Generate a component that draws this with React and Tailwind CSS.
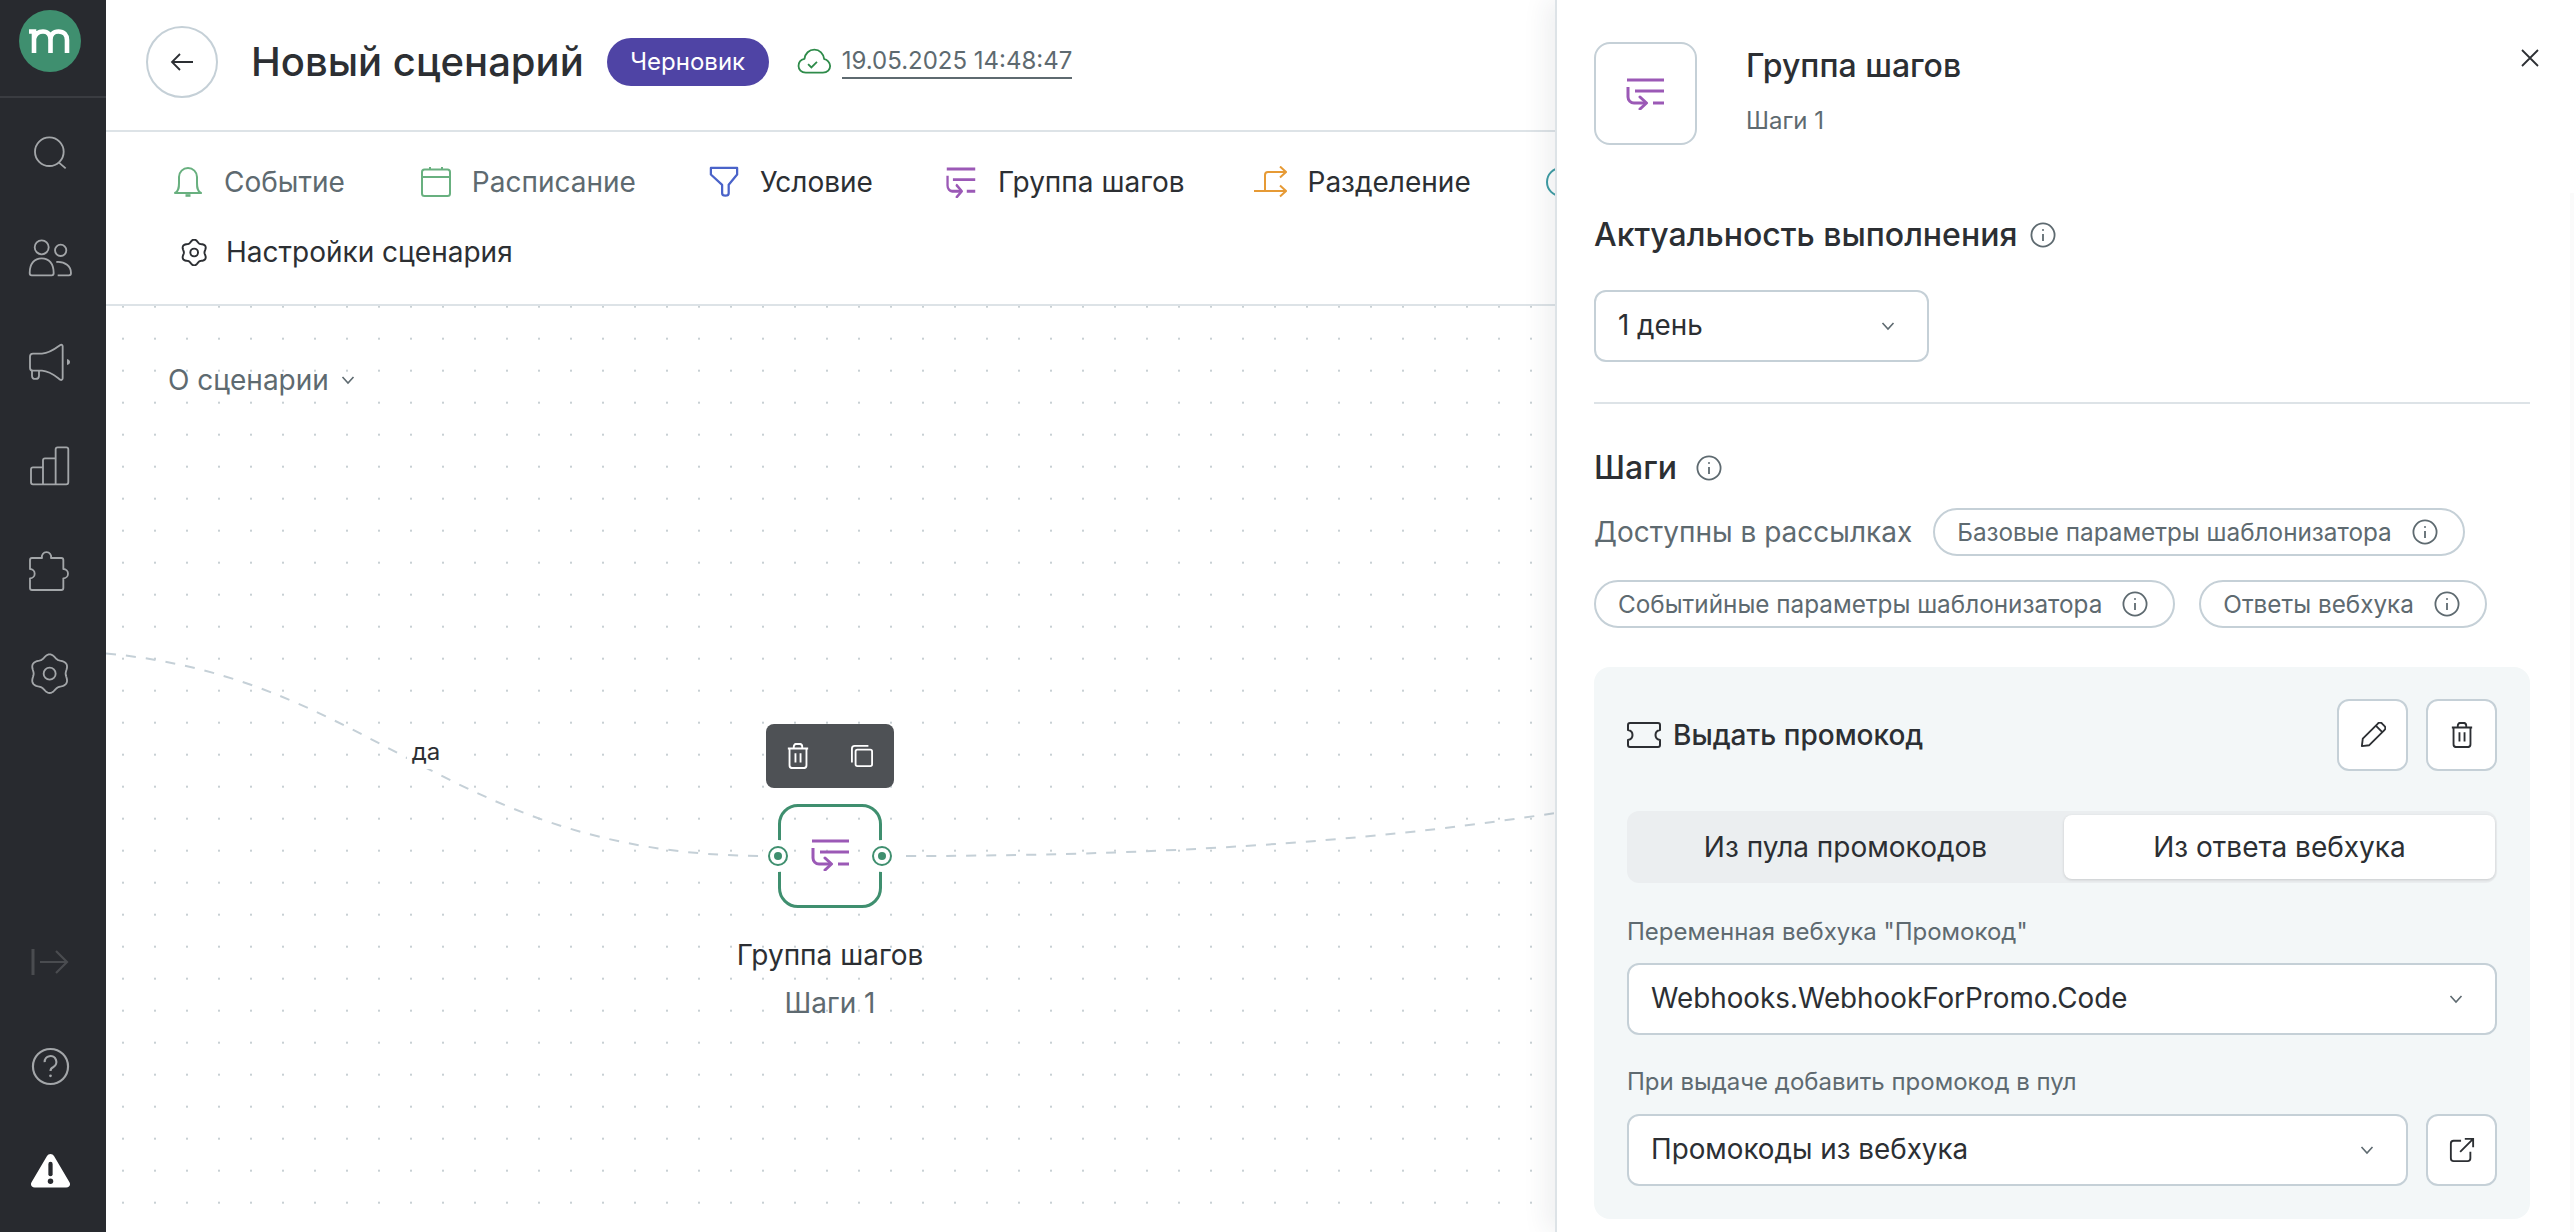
import React from "react";

const F = "font-['Inter',sans-serif]";

function gearPath(cx, cy, base, amp) {
  const pts = [];
  for (let i = 0; i < 120; i++) {
    const t = (i / 120) * Math.PI * 2;
    const r = base + amp * Math.cos(6 * t);
    pts.push(`${(cx + r * Math.sin(t)).toFixed(2)} ${(cy - r * Math.cos(t)).toFixed(2)}`);
  }
  return `M${pts.join("L")}Z`;
}

function GroupIcon({ className = "", stretch = false }) {
  return (
    <svg viewBox="0 0 39 32" preserveAspectRatio={stretch ? "none" : "xMidYMid meet"} className={className} fill="none" stroke="#9b59b6" strokeWidth="3">
      <path d="M1 2H38M9 13H38M27 25H38" />
      <path d="M2 9V19a6 6 0 0 0 6 6H20" />
      <path d="M14 19L20.500 25L14 31" strokeLinecap="round" strokeLinejoin="round" />
    </svg>
  );
}

function Info({ className = "w-[26px] h-[26px]" }) {
  return (
    <svg viewBox="0 0 26 26" className={`${className} shrink-0`} fill="none" stroke="#5e6a70" strokeWidth="1.800">
      <circle cx="13" cy="13" r="11.600" />
      <path d="M13 12V19" />
      <circle cx="13" cy="8" r="1" fill="#5e6a70" stroke="none" />
    </svg>
  );
}

function Chevron({ className = "" }) {
  return (
    <svg viewBox="0 0 14 10" className={`w-[14px] h-[10px] ${className}`} fill="none" stroke="#5e6a70" strokeWidth="1.600">
      <path d="M1.500 2L7 8L12.500 2" />
    </svg>
  );
}

function Trash({ color = "#ffffff" }) {
  return (
    <svg viewBox="0 0 26 28" preserveAspectRatio="none" className="w-[22px] h-[26px]" fill="none" stroke={color} strokeWidth="2.200" strokeLinejoin="round">
      <path d="M1 6H25M8 6V4a3 3 0 0 1 3-3h4a3 3 0 0 1 3 3V6" />
      <path d="M3 6V24a3 3 0 0 0 3 3H20a3 3 0 0 0 3-3V6" />
      <path d="M10 11V21M16 11V21" />
    </svg>
  );
}

function SideIcon({ children, className = "" }) {
  return <div className={`h-[104px] flex items-center justify-center shrink-0 ${className}`}>{children}</div>;
}

function Sidebar() {
  const st = { fill: "none", stroke: "#a3a6a9", strokeWidth: 5.500, strokeLinejoin: "round" };
  return (
    <aside className="w-[106px] h-full bg-[#282a2f] flex flex-col shrink-0 pr-0">
      <div className="h-[98px] border-b-2 border-[#3a3c41] flex items-center pl-[19px] shrink-0 pb-[14px]">
        <svg viewBox="0 0 62 62" className="w-[62px] h-[62px]">
          <circle cx="31" cy="31" r="31" fill="#3f8f6f" />
          <path d="M10 21.500H15V43M15 28.500C16.500 23.500 20 21.500 24 21.500 29 21.500 31.500 25 31.500 29.500V43M31.500 29.500C31.500 25 34 21.500 39.500 21.500 45 21.500 48 25 48 30V43" fill="none" stroke="#ffffff" strokeWidth="4.600" />
        </svg>
      </div>
      <div className="flex flex-col pt-[4px] pr-[6px]">
        <SideIcon className="pb-[3px]">
          <svg viewBox="95 375 105 105" className="w-[35px] h-[35px]" {...st}>
            <circle cx="144" cy="425" r="43" />
            <path d="M173 458L193 475" />
          </svg>
        </SideIcon>
        <SideIcon>
          <svg viewBox="80 685 140 118" className="w-[46.700px] h-[39.300px]" {...st}>
            <circle cx="124" cy="713" r="21" />
            <circle cx="181" cy="722" r="17" />
            <path d="M88 790C88 762 102 746 124 746 146 746 160 762 160 790 160 795 158 797 154 797H94C90 797 88 795 88 790Z" />
            <path d="M168 757C195 755 212 770 212 790 212 795 210 797 206 797H172" />
          </svg>
        </SideIcon>
        <SideIcon>
          <svg viewBox="88 65 132 122" className="w-[44px] h-[40.700px]" {...st}>
            <path d="M103 100H130C155 98 170 85 185 74 188 72 192 74 192 78V174C192 178 188 180 185 178 170 167 155 153 130 151H103C98 151 94 147 94 142V109C94 104 98 100 103 100Z" />
            <path d="M100 151V166C100 179 121 179 121 166V151" />
            <path d="M205 116C211 117 214 121 214 125 214 129 211 133 205 134Z" fill="#a3a6a9" stroke="none" />
          </svg>
        </SideIcon>
        <SideIcon>
          <svg viewBox="88 375 124 124" className="w-[41.300px] h-[41.300px]" {...st}>
            <path d="M130 442H100a6 6 0 0 0-6 6V487a6 6 0 0 0 6 6H200a6 6 0 0 0 6-6V388a6 6 0 0 0-6-6H174a6 6 0 0 0-6 6V493" />
            <path d="M168 415H136a6 6 0 0 0-6 6V493" />
          </svg>
        </SideIcon>
        <SideIcon>
          <svg viewBox="88 678 135 132" className="w-[45px] h-[44px]" {...st}>
            <path d="M100 708H130a14 14 0 1 1 27 0H188a6 6 0 0 1 6 6V741a14 14 0 1 1 0 28V798a6 6 0 0 1-6 6H100a6 6 0 0 1-6-6V769a14 14 0 1 0 0-28V714a6 6 0 0 1 6-6Z" />
          </svg>
        </SideIcon>
        <SideIcon>
          <svg viewBox="88 1000 124 124" className="w-[41.300px] h-[41.300px]" {...st}>
            <path d={gearPath(150, 1062, 53, 5)} />
            <circle cx="150" cy="1062" r="18" />
          </svg>
        </SideIcon>
      </div>
      <div className="flex-1" />
      <div className="flex flex-col pb-[10px] pr-[6px]">
        <SideIcon>
          <svg viewBox="0 0 38 28" className="w-[38px] h-[28px]" fill="none" stroke="#4a4c50" strokeWidth="2.200">
            <path d="M2 1V27" strokeWidth="3" />
            <path d="M9 14H36M25 3L36 14L25 25" />
          </svg>
        </SideIcon>
        <SideIcon>
          <svg viewBox="0 0 40 40" className="w-[39px] h-[39px]" fill="none" stroke="#a3a6a9" strokeWidth="2.200">
            <circle cx="20" cy="20" r="18" />
            <path d="M14 15.500a6 6 0 1 1 9 5c-2 1-3 2-3 4" />
            <circle cx="20" cy="29.500" r="1.400" fill="#a3a6a9" stroke="none" />
          </svg>
        </SideIcon>
        <SideIcon>
          <svg viewBox="0 0 42 36" className="w-[41px] h-[35px]">
            <path d="M21 1c1.500 0 2.800.800 3.600 2.200L40.500 30c1.600 2.800-.200 5.500-3.300 5.500H4.800C1.700 35.500-.100 32.800 1.500 30L17.400 3.200C18.200 1.800 19.500 1 21 1z" fill="#ffffff" />
            <rect x="18.800" y="9" width="4.400" height="15" rx="2.200" fill="#282a2f" />
            <circle cx="21" cy="29" r="2.800" fill="#282a2f" />
          </svg>
        </SideIcon>
      </div>
    </aside>
  );
}

function Tool({ icon, label, muted, className = "" }) {
  return (
    <div className={`flex items-center shrink-0 ${className}`}>
      {icon}
      <span className={`text-[28px] ${muted ? "text-[#5e6a70]" : "text-[#2c2f33]"}`}>{label}</span>
    </div>
  );
}

function Handle({ className }) {
  return (
    <div className={`absolute top-[33px] w-[32px] h-[32px] rounded-full bg-white flex items-center justify-center ${className}`}>
      <div className="w-[20px] h-[20px] rounded-full border-2 border-[#3f8f6f] flex items-center justify-center">
        <div className="w-[8px] h-[8px] rounded-full bg-[#3f8f6f]" />
      </div>
    </div>
  );
}

function Canvas() {
  return (
    <div className="relative flex-1 overflow-hidden bg-white bg-[radial-gradient(circle,#c8d0d4_1px,transparent_1.400px)] bg-[size:32px_32px] bg-[position:1px_16.700px]">
      <div className="absolute left-[62px] top-[53px] flex items-center gap-[12px] text-[28px] text-[#5e6a70]">
        О сценарии
        <Chevron />
      </div>
      <svg className="absolute left-0 top-0 w-[1449px] h-[927px]" viewBox="0 0 1449 927" fill="none" stroke="#c5d0d7" strokeWidth="2" strokeDasharray="10 10">
        <path d="M-60 345C260 345 320 550 660 550" />
        <path d="M800 550C1100 550 1300 530 1449 507" />
      </svg>
      <div className="absolute left-[301px] top-[429px] w-[38px] h-[34px] bg-white flex items-center justify-center text-[24px] text-[#2c2f33]">да</div>
      <div className="absolute left-[660px] top-[418px] w-[128px] h-[64px] rounded-[8px] bg-[#4e5155] flex items-center justify-between px-[21px]">
        <Trash />
        <svg viewBox="0 0 24 24" className="w-[22px] h-[22px]" fill="none" stroke="#ffffff" strokeWidth="2">
          <rect x="5" y="5" width="18" height="18" rx="2" />
          <path d="M19 1H4a3 3 0 0 0-3 3V19" />
        </svg>
      </div>
      <div className="absolute left-[672px] top-[498px] w-[104px] h-[104px] rounded-[20px] border-[3px] border-[#3f8f6f] flex items-center justify-center">
        <GroupIcon className="w-[39px] h-[32px] -translate-y-[1px]" />
        <Handle className="-left-[19px]" />
        <Handle className="-right-[19px]" />
      </div>
      <div className="absolute left-[624px] top-[630px] w-[200px] flex flex-col items-center">
        <div className="text-[28px] leading-[38px] text-[#2c2f33]">Группа шагов</div>
        <div className="text-[28px] leading-[38px] mt-[10px] text-[#5e6a70]">Шаги 1</div>
      </div>
    </div>
  );
}

function Main() {
  return (
    <main className="flex-1 min-w-0 h-full flex flex-col overflow-hidden bg-white">
      <header className="h-[132px] border-b-2 border-[#dde3e7] flex items-center pl-[40px] pb-[7px] shrink-0">
        <button className="w-[72px] h-[72px] rounded-full border-2 border-[#c5d0d7] flex items-center justify-center">
          <svg viewBox="0 0 24 20" className="w-[24px] h-[20px]" fill="none" stroke="#2c2f33" strokeWidth="1.800"><path d="M23 10H2M10 2L2 10L10 18" /></svg>
        </button>
        <h1 className="ml-[33px] text-[40px] font-medium text-[#2c2f33] leading-none">Новый сценарий</h1>
        <span className="ml-[23px] h-[48px] w-[162px] rounded-full bg-[#4f44a5] text-white text-[24px] flex items-center justify-center">Черновик</span>
        <svg viewBox="20 25 105 82" className="ml-[28px] w-[35px] h-[27px]" fill="none" stroke="#2e8b4a" strokeWidth="5.500">
          <path d="M50 100H98C112 100 120 90 120 80 120 68 110 60 102 59 100 42 88 30 72 30 56 30 44 42 42 58 32 60 24 68 24 80 24 90 32 100 46 100Z" strokeLinejoin="round" />
          <path d="M53 74L63 84L80 67" />
        </svg>
        <span className="ml-[10px] text-[24px] text-[#5e6a70] border-b-2 border-[#5e6a70] leading-[32px]">19.05.2025 14:48:47</span>
      </header>
      <div className="h-[174px] border-b-2 border-[#dde3e7] shrink-0 flex flex-col pl-[68px] pt-[24px] overflow-hidden">
        <div className="flex items-center h-[52px]">
          <Tool
            muted
            label="Событие"
            className="gap-[22px]"
            icon={
              <svg viewBox="0 0 28 30" className="w-[28px] h-[30px]" fill="none" stroke="#68b07f" strokeWidth="2">
                <path d="M1 26C5 24 5 20 5 16V10a9 9 0 0 1 18 0V16C23 20 23 24 27 26Z" strokeLinejoin="round" />
                <path d="M11.500 28.500H16.500" strokeWidth="2.600" />
              </svg>
            }
          />
          <Tool
            muted
            label="Расписание"
            className="ml-[76px] gap-[21px]"
            icon={
              <svg viewBox="0 0 30 30" className="w-[30px] h-[30px]" fill="none" stroke="#68b07f" strokeWidth="2">
                <rect x="1" y="2.500" width="28" height="26.500" rx="2.500" />
                <path d="M1 10H29M9 0V3M21 0V3" />
              </svg>
            }
          />
          <Tool
            label="Условие"
            className="ml-[73px] gap-[21px]"
            icon={
              <svg viewBox="0 0 32 32" className="w-[30px] h-[32px]" fill="none" stroke="#4a63c9" strokeWidth="2.400" strokeLinejoin="round">
                <path d="M2 1H30V8L21 19V28C21 31.500 14 31.500 14 28V19L2 8Z" />
              </svg>
            }
          />
          <Tool label="Группа шагов" className="ml-[73px] gap-[22px]" icon={<GroupIcon stretch className="w-[30px] h-[31px]" />} />
          <Tool
            label="Разделение"
            className="ml-[69px] gap-[21px]"
            icon={
              <svg viewBox="0 0 33 32" className="w-[33px] h-[32px]" fill="none" stroke="#e69a35" strokeWidth="2">
                <path d="M0 25H31.500M26 19.500L32 25L26 30.500M11 25V9a3 3 0 0 1 3-3H31.500M26 .500L32 6L26 11.500" />
              </svg>
            }
          />
          <svg viewBox="0 0 32 32" className="ml-[74px] w-[32px] h-[32px] shrink-0" fill="none" stroke="#3f9da5" strokeWidth="2">
            <circle cx="16" cy="16" r="14" />
          </svg>
        </div>
        <div className="flex items-center mt-[18px] h-[52px] pl-[7px]">
          <Tool
            className="gap-[18px]"
            label="Настройки сценария"
            icon={
              <svg viewBox="62 265 84 84" className="w-[27px] h-[27px]" fill="none" stroke="#2c2f33" strokeWidth="6">
                <path d={gearPath(103, 307, 36, 4)} />
                <circle cx="103" cy="307" r="12" />
              </svg>
            }
          />
        </div>
      </div>
      <Canvas />
    </main>
  );
}

function Select({ value, className = "" }) {
  return (
    <div className={`h-[72px] bg-white border-2 border-[#c5d0d7] rounded-[12px] flex items-center justify-between pl-[22px] pr-[32px] ${className}`}>
      <span className="text-[27.800px] text-[#2c2f33]">{value}</span>
      <Chevron />
    </div>
  );
}

function Chip({ label, className = "" }) {
  return (
    <div className={`h-[48px] rounded-full border-2 border-[#c5d0d7] flex items-center gap-[20px] pl-[22px] pr-[25px] bg-white ${className}`}>
      <span className="text-[24.300px] text-[#5e6a70]">{label}</span>
      <Info />
    </div>
  );
}

function IconBtn({ children }) {
  return <button className="w-[71px] h-[72px] shrink-0 rounded-[12px] border-2 border-[#c5d0d7] bg-white flex items-center justify-center">{children}</button>;
}

function Panel() {
  return (
    <section className="relative w-[1019px] h-full shrink-0 bg-white border-l-2 border-[#dde3e7] shadow-[-8px_0_24px_rgba(40,50,60,0.08)] pl-[37px] pr-[44px] pt-[42px] overflow-hidden">
      <div className="absolute right-0 top-[193px] bottom-0 w-[4px] bg-[#fafafa]" />
      <button className="absolute right-[34px] top-[48px]">
        <svg viewBox="0 0 20 20" className="w-[20px] h-[20px]" fill="none" stroke="#2c2f33" strokeWidth="1.800"><path d="M2 2L18 18M18 2L2 18" /></svg>
      </button>
      <div className="flex items-start gap-[49px]">
        <div className="w-[103px] h-[103px] rounded-[16px] border-2 border-[#c5d0d7] flex items-center justify-center shrink-0">
          <GroupIcon className="w-[39px] h-[32px]" />
        </div>
        <div className="flex flex-col">
          <div className="text-[32px] font-medium text-[#2c2f33] leading-[48px]">Группа шагов</div>
          <div className="text-[24px] text-[#5e6a70] leading-[32px] mt-[15px]">Шаги 1</div>
        </div>
      </div>
      <div className="flex items-center gap-[13px] mt-[66px] h-[48px]">
        <h2 className="text-[32px] font-medium text-[#2c2f33]">Актуальность выполнения</h2>
        <Info />
      </div>
      <Select value="1 день" className="w-[335px] mt-[31px]" />
      <div className="h-[2px] bg-[#dde3e7] mt-[40px]" />
      <div className="flex items-center gap-[19px] mt-[40px] h-[48px]">
        <h2 className="text-[32px] font-medium text-[#2c2f33]">Шаги</h2>
        <Info />
      </div>
      <div className="flex flex-wrap items-center gap-x-[24px] gap-y-[24px] mt-[16px] w-[936px]">
        <span className="text-[28px] text-[#5e6a70]">Доступны в рассылках</span>
        <Chip label="Базовые параметры шаблонизатора" className="-ml-[3px]" />
        <Chip label="Событийные параметры шаблонизатора" />
        <Chip label="Ответы вебхука" />
      </div>
      <div className="mt-[39px] bg-[#f3f7f8] rounded-[16px] p-[33px] pt-[32px]">
        <div className="flex items-center gap-[18px]">
          <div className="flex-1 flex items-center gap-[12px]">
            <svg viewBox="0 0 34 26" className="w-[34px] h-[26px]" fill="none" stroke="#2c2f33" strokeWidth="2" strokeLinejoin="round">
              <path d="M1 3a2 2 0 0 1 2-2H31a2 2 0 0 1 2 2V8c-6 1-6 9 0 10v5a2 2 0 0 1-2 2H3a2 2 0 0 1-2-2V18c6-1 6-9 0-10z" />
            </svg>
            <span className="text-[28px] font-medium text-[#2c2f33]">Выдать промокод</span>
          </div>
          <IconBtn>
            <svg viewBox="0 0 28 28" className="w-[26px] h-[26px]" fill="none" stroke="#2c2f33" strokeWidth="2" strokeLinejoin="round">
              <path d="M2 26L3 18L19 2a3 3 0 0 1 5 0L26 4a3 3 0 0 1 0 5L10 25z" />
              <path d="M17 4L24 11" />
            </svg>
          </IconBtn>
          <IconBtn>
            <Trash color="#2c2f33" />
          </IconBtn>
        </div>
        <div className="mt-[40px] h-[72px] rounded-[12px] bg-[#ebeef0] grid grid-cols-[437px_431px] items-center pr-[2px]">
          <div className="text-center text-[28px] text-[#2c2f33]">Из пула промокодов</div>
          <div className="h-[64px] rounded-[8px] bg-white shadow-[0_1px_3px_rgba(0,0,0,0.15)] flex items-center justify-center text-[28px] text-[#2c2f33]">Из ответа вебхука</div>
        </div>
        <div className="mt-[32px] text-[24px] leading-[34px] text-[#5e6a70]">Переменная вебхука "Промокод"</div>
        <Select value="Webhooks.WebhookForPromo.Code" className="mt-[14px]" />
        <div className="mt-[30px] text-[24px] leading-[34px] text-[#5e6a70]">При выдаче добавить промокод в пул</div>
        <div className="flex items-center gap-[18px] mt-[15px]">
          <Select value="Промокоды из вебхука" className="flex-1" />
          <IconBtn>
            <svg viewBox="0 0 28 28" className="w-[26px] h-[26px]" fill="none" stroke="#2c2f33" strokeWidth="2">
              <path d="M13 4H5a3 3 0 0 0-3 3V23a3 3 0 0 0 3 3H20a3 3 0 0 0 3-3V16" />
              <path d="M12 16L26 2M17 2H26V11" />
            </svg>
          </IconBtn>
        </div>
      </div>
    </section>
  );
}

export default function App() {
  return (
    <div className={`w-screen h-screen overflow-hidden flex ${F}`}>
      <Sidebar />
      <Main />
      <Panel />
    </div>
  );
}
